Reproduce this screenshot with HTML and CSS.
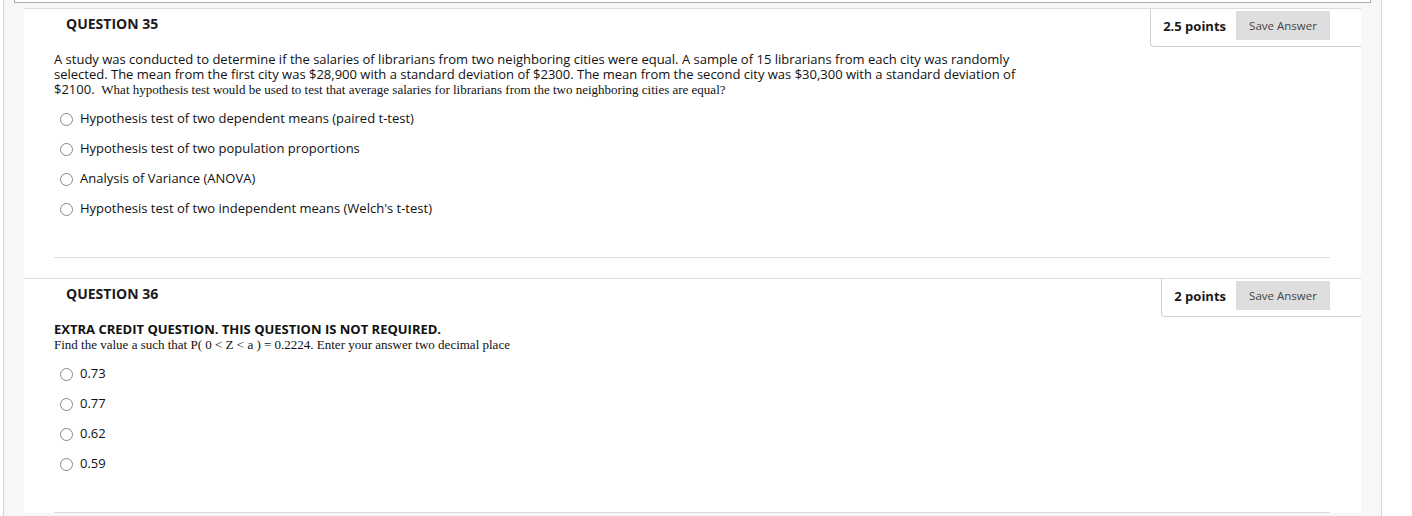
FILE: index.html
```html
<!DOCTYPE html>
<html>
<head>
<meta charset="utf-8">
<link rel="stylesheet" href="styles.css">
</head>
<body>
<div class="frame">
  <div class="prev-box"></div>
  <div class="content">
    <section class="question">
      <div class="q-head">
        <h3 class="q-title">QUESTION 35</h3>
        <div class="points">
          <span class="pts">2.5 points</span>
          <button class="save">Save Answer</button>
        </div>
      </div>
      <div class="q-body">
        <p class="q-text">A study was conducted to determine if the salaries of librarians from two neighboring cities were equal. A sample of 15 librarians from each city was randomly selected. The mean from the first city was $28,900 with a standard deviation of $2300. The mean from the second city was $30,300 with a standard deviation of $2100.&nbsp; <span class="serif">What hypothesis test would be used to test that average salaries for librarians from the two neighboring cities are equal?</span></p>
        <ul class="options">
          <li><span class="radio"></span>Hypothesis test of two dependent means (paired t-test)</li>
          <li><span class="radio"></span>Hypothesis test of two population proportions</li>
          <li><span class="radio"></span>Analysis of Variance (ANOVA)</li>
          <li><span class="radio"></span>Hypothesis test of two independent means (Welch's t-test)</li>
        </ul>
      </div>
      <div class="sep"></div>
    </section>
    <section class="question">
      <div class="q-head">
        <h3 class="q-title">QUESTION 36</h3>
        <div class="points">
          <span class="pts">2 points</span>
          <button class="save">Save Answer</button>
        </div>
      </div>
      <div class="q-body">
        <p class="q-text"><strong>EXTRA CREDIT QUESTION. THIS QUESTION IS NOT REQUIRED.</strong><br><span class="serif">Find the value a such that P( 0 &lt; Z &lt; a ) = 0.2224. Enter your answer two decimal place</span></p>
        <ul class="options">
          <li><span class="radio"></span>0.73</li>
          <li><span class="radio"></span>0.77</li>
          <li><span class="radio"></span>0.62</li>
          <li><span class="radio"></span>0.59</li>
        </ul>
      </div>
      <div class="sep"></div>
    </section>
  </div>
</div>
</body>
</html>
```
FILE: styles.css
```css
html, body {
  margin: 0;
  padding: 0;
  background: #ffffff;
  height: 516px;
  overflow: hidden;
}
body {
  font-family: "Open Sans", "Liberation Sans", sans-serif;
  color: #111;
}
.frame {
  margin-left: 3px;
  width: 1377px;
  min-height: 516px;
  background: #f7f7f7;
  border-left: 1px solid #d4d4d4;
  border-right: 1px solid #d4d4d4;
}
.prev-box {
  margin: 0 10px;
  height: 2px;
  background: #fff;
  border: 1px solid #aaa;
  border-top: none;
}
.content {
  margin-left: 20px;
  width: 1337px;
  margin-top: 5px;
  background: #fff;
}
.question {
  border-top: 1px solid #dcdcdc;
}
.q-head {
  display: flex;
  justify-content: space-between;
  align-items: flex-start;
}
.q-title {
  margin: 0;
  padding: 5px 0 0 42px;
  font-size: 14px;
  line-height: 20px;
  font-weight: 700;
  color: #1a1a1a;
}
.points {
  display: flex;
  align-items: center;
  gap: 10px;
  padding: 2px 31px 6px 12px;
  border-left: 1px solid #d0d0d0;
  border-bottom: 1px solid #d0d0d0;
  border-bottom-left-radius: 4px;
}
.pts {
  font-size: 13px;
  font-weight: 700;
  color: #1a1a1a;
}
.save {
  font-family: "Open Sans", "Liberation Sans", sans-serif;
  font-size: 11.5px;
  color: #444;
  background: #dedede;
  border: none;
  width: 94px;
  height: 29px;
  padding: 0;
}
.q-body {
  padding-left: 30px;
}
.q-text {
  margin: 5px 0 0 0;
  max-width: 975px;
  font-size: 13px;
  line-height: 15px;
}
.q-text strong {
  font-weight: 700;
}
.serif {
  font-family: "Liberation Serif", "Times New Roman", serif;
  font-size: 13px;
}
.options {
  list-style: none;
  margin: 6px 0 0 0;
  padding: 0 0 0 6px;
}
.options li {
  display: flex;
  align-items: center;
  height: 30px;
  font-size: 13px;
}
.radio {
  width: 11px;
  height: 11px;
  border: 1px solid #888;
  border-radius: 50%;
  margin-right: 7px;
  margin-top: 2px;
  flex: none;
}
.sep {
  margin: 34px 31px 20px 30px;
  border-top: 1px solid #dcdcdc;
}
```
